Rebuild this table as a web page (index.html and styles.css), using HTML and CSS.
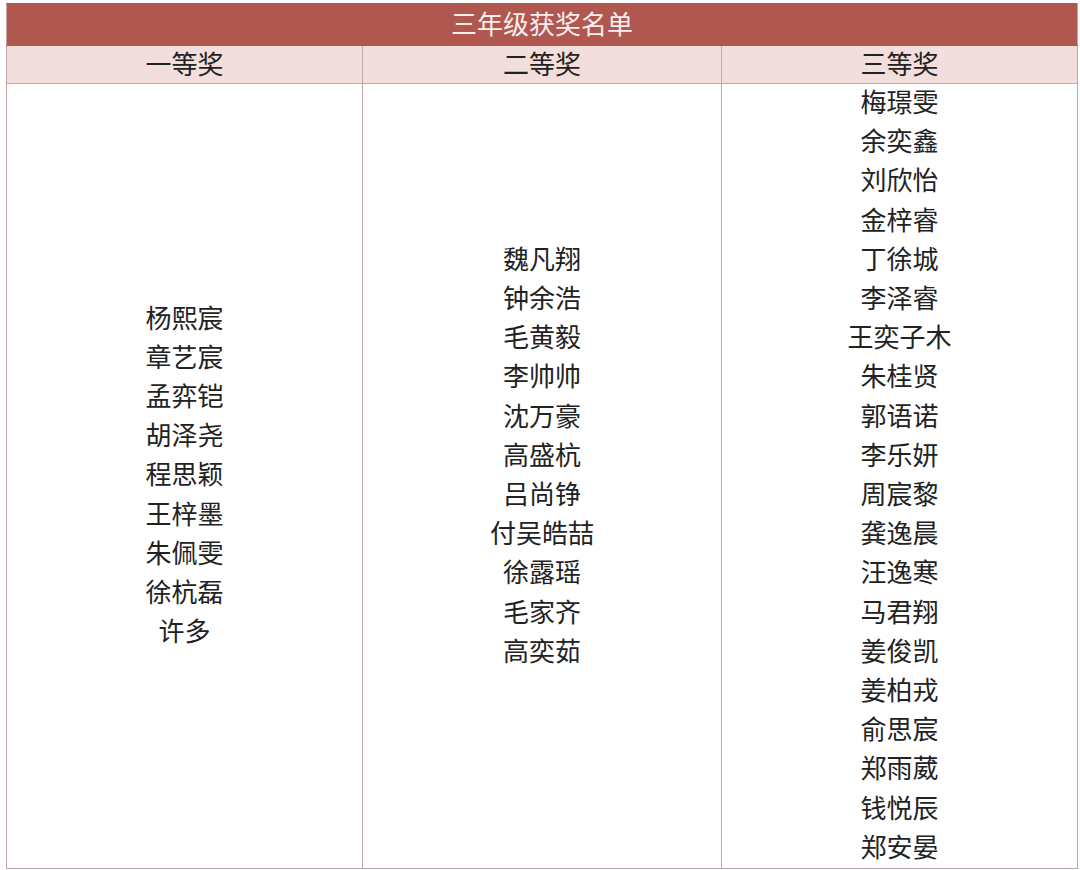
FILE: index.html
```html
<!DOCTYPE html>
<html lang="zh">
<head>
<meta charset="utf-8">
<link rel="stylesheet" href="styles.css">
</head>
<body>
<div class="page">
<table class="awards">
  <colgroup>
    <col class="c1"><col class="c2"><col class="c3">
  </colgroup>
  <thead>
    <tr><th class="title" colspan="3">三年级获奖名单</th></tr>
    <tr class="heads"><th>一等奖</th><th>二等奖</th><th>三等奖</th></tr>
  </thead>
  <tbody>
    <tr class="names">
      <td>杨熙宸<br>章艺宸<br>孟弈铠<br>胡泽尧<br>程思颖<br>王梓墨<br>朱佩雯<br>徐杭磊<br>许多</td>
      <td>魏凡翔<br>钟余浩<br>毛黄毅<br>李帅帅<br>沈万豪<br>高盛杭<br>吕尚铮<br>付吴皓喆<br>徐露瑶<br>毛家齐<br>高奕茹<br>&nbsp;</td>
      <td>梅璟雯<br>余奕鑫<br>刘欣怡<br>金梓睿<br>丁徐城<br>李泽睿<br>王奕子木<br>朱桂贤<br>郭语诺<br>李乐妍<br>周宸黎<br>龚逸晨<br>汪逸寒<br>马君翔<br>姜俊凯<br>姜柏戎<br>俞思宸<br>郑雨葳<br>钱悦辰<br>郑安晏</td>
    </tr>
  </tbody>
</table>
</div>
</body>
</html>
```

FILE: styles.css
```css
html, body {
  margin: 0;
  padding: 0;
  background: #ffffff;
}
.page {
  padding: 3px 3px 0 6px;
}
.awards {
  width: 1071px;
  border-collapse: collapse;
  table-layout: fixed;
  font-family: "Liberation Serif", "Noto Sans CJK SC", serif;
  font-size: 26px;
  color: #222222;
}
.c1 { width: 356px; }
.c2 { width: 359px; }
.c3 { width: 356px; }
.awards th, .awards td {
  border: 1.5px solid #c3a7a7;
  text-align: center;
  font-weight: normal;
  padding: 0;
}
.title {
  background: #b0574f;
  color: #fbeeee;
  height: 39px;
  line-height: 39px;
  padding-top: 2px !important;
  border-color: #b0574f !important;
  border-left-color: #c3a7a7 !important;
  border-right-color: #c3a7a7 !important;
}
.heads th {
  background: #f2dedd;
  height: 35px;
  line-height: 35px;
  padding-top: 2px;
}
.names td {
  vertical-align: middle;
  line-height: 39.2px;
  padding: 0;
}
```
